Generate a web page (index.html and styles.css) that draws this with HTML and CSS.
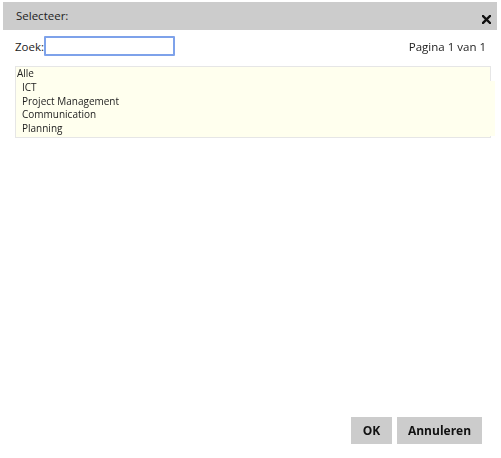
FILE: index.html
```html
<!DOCTYPE html>
<html>
<head>
<meta charset="utf-8">
<link rel="stylesheet" href="styles.css">
</head>
<body>
<div class="dialog">
  <div class="titlebar">
    <span class="title">Selecteer:</span>
    <svg class="close" width="9" height="9" viewBox="0 0 9 9"><path d="M1 1 L8 8 M8 1 L1 8" stroke="#111" stroke-width="2.4" stroke-linecap="square"/></svg>
  </div>
  <div class="content">
    <div class="searchrow">
      <label class="search">Zoek:<input class="searchinput" type="text" autofocus></label>
      <span class="paging">Pagina 1 van 1</span>
    </div>
    <div class="list">
      <div class="item">Alle</div>
      <div class="sub">
        <div class="item">ICT</div>
        <div class="item">Project Management</div>
        <div class="item">Communication</div>
        <div class="item">Planning</div>
      </div>
    </div>
  </div>
  <div class="footer">
    <button class="btn btn-ok">OK</button>
    <button class="btn btn-cancel">Annuleren</button>
  </div>
</div>
</body>
</html>
```
FILE: styles.css
```css
html, body {
  margin: 0;
  padding: 0;
  background: #fff;
}
body {
  font-family: "Open Sans", "Liberation Sans", sans-serif;
  color: #222;
}
.dialog {
  height: 458px;
  display: flex;
  flex-direction: column;
  padding: 2px 4px 0 3px;
  box-sizing: border-box;
}
.titlebar {
  height: 28px;
  background: #cccccc;
  display: flex;
  align-items: center;
  justify-content: space-between;
  padding: 0 6px 0 13px;
  font-size: 11.5px;
  color: #222;
}
.title {
  margin-top: -1px;
}
.close {
  display: block;
  margin-top: 7px;
}
.content {
  padding: 0 8px 0 12px;
}
.searchrow {
  display: flex;
  justify-content: space-between;
  align-items: center;
  height: 32px;
  font-size: 11.5px;
}
.search {
  display: flex;
  align-items: center;
}
.searchinput {
  width: 125px;
  height: 16px;
  margin: 0;
  padding: 0 1px;
  border: 2px solid #7ea2ea;
  border-radius: 1px;
  outline: none;
  font-size: 12px;
  font-family: inherit;
  caret-color: #000;
}
.paging {
  margin-right: 3px;
}
.list {
  margin-top: 4px;
  width: 473px;
  border: 1px solid #e6e6e6;
  background: #ffffee;
  padding: 0 0 1px 1px;
  font-size: 10px;
  line-height: 13.75px;
  color: #222;
}
.sub {
  margin-left: 5px;
  width: 100%;
  background: #ffffee;
}
.footer {
  margin-top: auto;
  display: flex;
  justify-content: flex-end;
  gap: 5px;
  padding: 0 15px 14px 0;
}
.btn {
  height: 27px;
  border: none;
  background: #cccccc;
  font-family: "Open Sans", "Liberation Sans", sans-serif;
  font-weight: bold;
  font-size: 12px;
  color: #111;
  padding: 0;
  margin: 0;
}
.btn-ok {
  width: 41px;
}
.btn-cancel {
  width: 85px;
}
```
